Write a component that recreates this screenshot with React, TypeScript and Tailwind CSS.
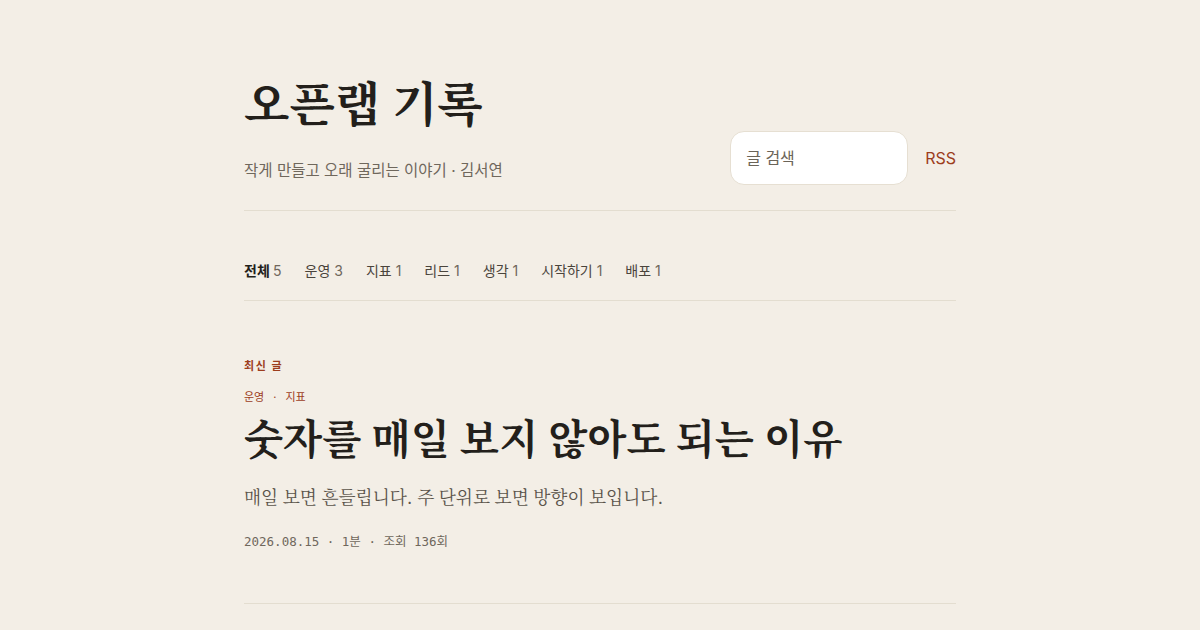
const sans = 'Inter, "Noto Sans CJK KR", "Noto Sans", sans-serif';
const serif = '"Noto Serif CJK KR", "Noto Serif KR", serif';
const mono = '"DejaVu Sans Mono", "Noto Sans CJK KR", monospace';

const cats: [string, number][] = [
  ['운영', 3],
  ['지표', 1],
  ['리드', 1],
  ['생각', 1],
  ['시작하기', 1],
  ['배포', 1],
];

export default function App() {
  return (
    <div className="min-h-screen bg-[#f3eee6] text-[#231f1b]" style={{ fontFamily: sans }}>
      <div className="mx-auto w-[712px] pt-[73px]">
        <header className="flex items-end justify-between border-b border-[#e3ddd0] pb-[27px]">
          <div>
            <h1
              className="text-[47px] font-bold leading-[56px] text-[#231f1b]"
              style={{ fontFamily: serif }}
            >
              오픈랩 기록
            </h1>
            <p className="mt-[30px] text-[15.5px] leading-[24px] text-[#6f675c]">
              작게 만들고 오래 굴리는 이야기 · 김서연
            </p>
          </div>
          <div className="mb-[-2px] flex items-center gap-[17px]">
            <div className="flex h-[54px] w-[178px] items-center rounded-[14px] border border-[#e6dfd2] bg-white px-[15px] text-[16px] text-[#6b6458]">
              글 검색
            </div>
            <a className="text-[16px] text-[#9c3d1d]">RSS</a>
          </div>
        </header>

        <nav className="mt-[50px] flex items-center gap-[23px] border-b border-[#e3ddd0] pb-[19px] text-[14px] leading-[20px]">
          <span className="font-bold text-[#231f1b]">
            전체 <span className="font-normal text-[#6f675c]">5</span>
          </span>
          {cats.map(([n, c]) => (
            <span key={n} className="text-[#4a443c]">
              {n} <span className="text-[#6f675c]">{c}</span>
            </span>
          ))}
        </nav>

        <section className="border-b border-[#e3ddd0] pb-[51px]">
          <div className="mt-[57px] text-[11px] font-bold leading-[16px] tracking-[0.14em] text-[#9c3d1d]">
            최신 글
          </div>
          <div className="mt-[15px] flex items-center gap-[9px] text-[11px] leading-[16px] text-[#9c3d1d]">
            <span>운영</span>
            <span>·</span>
            <span>지표</span>
          </div>
          <h2
            className="mt-[7px] text-[40.5px] font-bold leading-[50px] text-[#231f1b]"
            style={{ fontFamily: serif }}
          >
            숫자를 매일 보지 않아도 되는 이유
          </h2>
          <p className="mt-[21px] text-[17.7px] leading-[28px] text-[#5a534a]" style={{ fontFamily: serif }}>
            매일 보면 흔들립니다. 주 단위로 보면 방향이 보입니다.
          </p>
          <div className="mt-[21px] text-[12.5px] leading-[20px] text-[#6f675c]" style={{ fontFamily: mono }}>
            2026.08.15 · 1분 · 조회 136회
          </div>
        </section>
      </div>
    </div>
  );
}
